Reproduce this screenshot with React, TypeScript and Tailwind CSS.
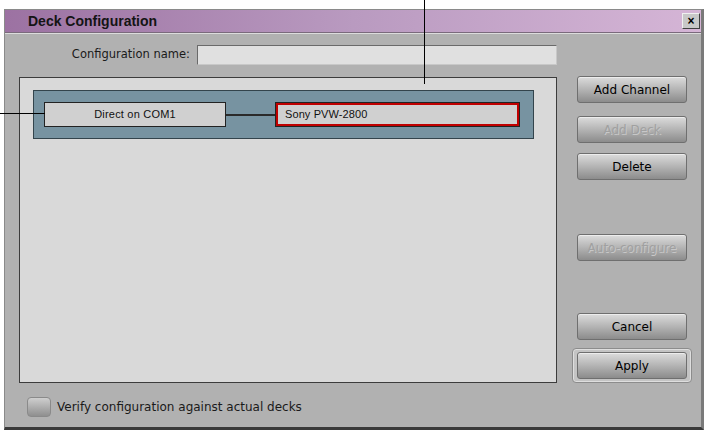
import React from 'react'

const FONT = { fontFamily: '"Liberation Sans", Arial, sans-serif' }
const UI = { fontFamily: '"DejaVu Sans", Verdana, sans-serif' }

function Btn({ label, disabled }: { label: string; disabled?: boolean }) {
  return (
    <div
      style={UI}
      className={`w-[110px] h-[27px] rounded-[3px] border border-[#6f6f6f] bg-gradient-to-b from-[#dcdcdc] via-[#b4b4b4] to-[#8c8c8c] shadow-[inset_0_1px_0_#ededed] flex items-center justify-center text-[12px] ${
        disabled ? 'text-[#a0a0a0] [text-shadow:1px_1px_0_#c8c8c8]' : 'text-black'
      }`}
    >
      {label}
    </div>
  )
}

export default function App() {
  return (
    <div className="relative w-[707px] h-[431px] bg-white overflow-hidden" style={FONT}>
      {/* dialog window */}
      <div className="absolute left-[4px] top-[9px] w-[700px] h-[421px] flex flex-col border border-[#8a8a8a] border-b-[3px] border-b-[#3a3a3a] border-r-[3px] border-r-[#7a7a7a] bg-[#b1b1b1]">
        {/* title bar */}
        <div className="h-[23px] flex items-center justify-between bg-gradient-to-r from-[#9c72a2] via-[#b99ac0] to-[#d5b5d6] border-b border-[#7a6a7c]">
          <span className="pl-[23px] text-[14px] font-bold text-[#141414]">Deck Configuration</span>
          <div className="mr-[1px] w-[18px] h-[16px] bg-[#c8c8c8] border border-[#f0f0f0] border-r-[#404040] border-b-[#404040] flex items-center justify-center text-[12px] font-bold leading-none">
            ×
          </div>
        </div>
        <div className="h-[1px] bg-[#dcdcdc]" />

        {/* body */}
        <div className="flex flex-1">
          <div className="pl-[14px] flex flex-col">
            <div className="mt-[11px] flex items-center h-[20px]">
              <span style={UI} className="w-[172px] text-right text-[11.5px] text-[#1a1a1a] pr-[1px]">Configuration name:</span>
              <div className="ml-[6px] w-[360px] h-[20px] bg-[#e0e0e0] border border-[#6a6a6a] border-r-[#c8c8c8] border-b-[#c8c8c8]" />
            </div>

            <div className="mt-[12px] w-[538px] h-[306px] border border-[#3c3c3c] bg-[#d9d9d9] pt-[12px] pl-[13px]">
              <div className="w-[501px] h-[49px] bg-[#7793a1] border border-[#33444c] flex items-center pl-[10px]">
                <div className="w-[182px] h-[25px] bg-[#d0d0d0] border border-[#222] flex items-center justify-center text-[11px] text-[#111] tracking-[0.2px]">
                  Direct on COM1
                </div>
                <div className="w-[49px] h-[2px] bg-[#2a2a2a]" />
                <div className="w-[245px] h-[25px] border border-[#222] p-0">
                  <div className="w-full h-full border-2 border-[#c00000] bg-[#d0d0d0] flex items-center pl-[7px] text-[11px] text-[#111] tracking-[0.1px]">
                    Sony PVW-2800
                  </div>
                </div>
              </div>
            </div>

            <div className="mt-[14px] flex items-center pl-[8px]">
              <div className="w-[24px] h-[20px] rounded-[4px] border border-[#8a8a8a] bg-gradient-to-b from-[#cfcfcf] to-[#8f8f8f]" />
              <span style={UI} className="ml-[6px] text-[12px] text-[#1a1a1a]">Verify configuration against actual decks</span>
            </div>
          </div>

          <div className="ml-[20px] flex flex-col pt-[42px]">
            <Btn label="Add Channel" />
            <div className="mt-[13px]">
              <Btn label="Add Deck" disabled />
            </div>
            <div className="mt-[10px]">
              <Btn label="Delete" />
            </div>
            <div className="mt-[54px]">
              <Btn label="Auto-configure" disabled />
            </div>
            <div className="mt-[52px]">
              <Btn label="Cancel" />
            </div>
            <div className="mt-[8px] -ml-[5px] w-[120px] h-[35px] rounded-[4px] border border-[#8c8c8c] bg-[#c4c4c4] flex items-center justify-center shadow-[inset_0_0_0_1px_#dedede]">
              <Btn label="Apply" />
            </div>
          </div>
        </div>
      </div>

      {/* callout lines */}
      <div className="absolute left-[424px] top-0 w-[1px] h-[84px] bg-black" />
      <div className="absolute left-0 top-[113px] w-[45px] h-[1px] bg-black" />
    </div>
  )
}
